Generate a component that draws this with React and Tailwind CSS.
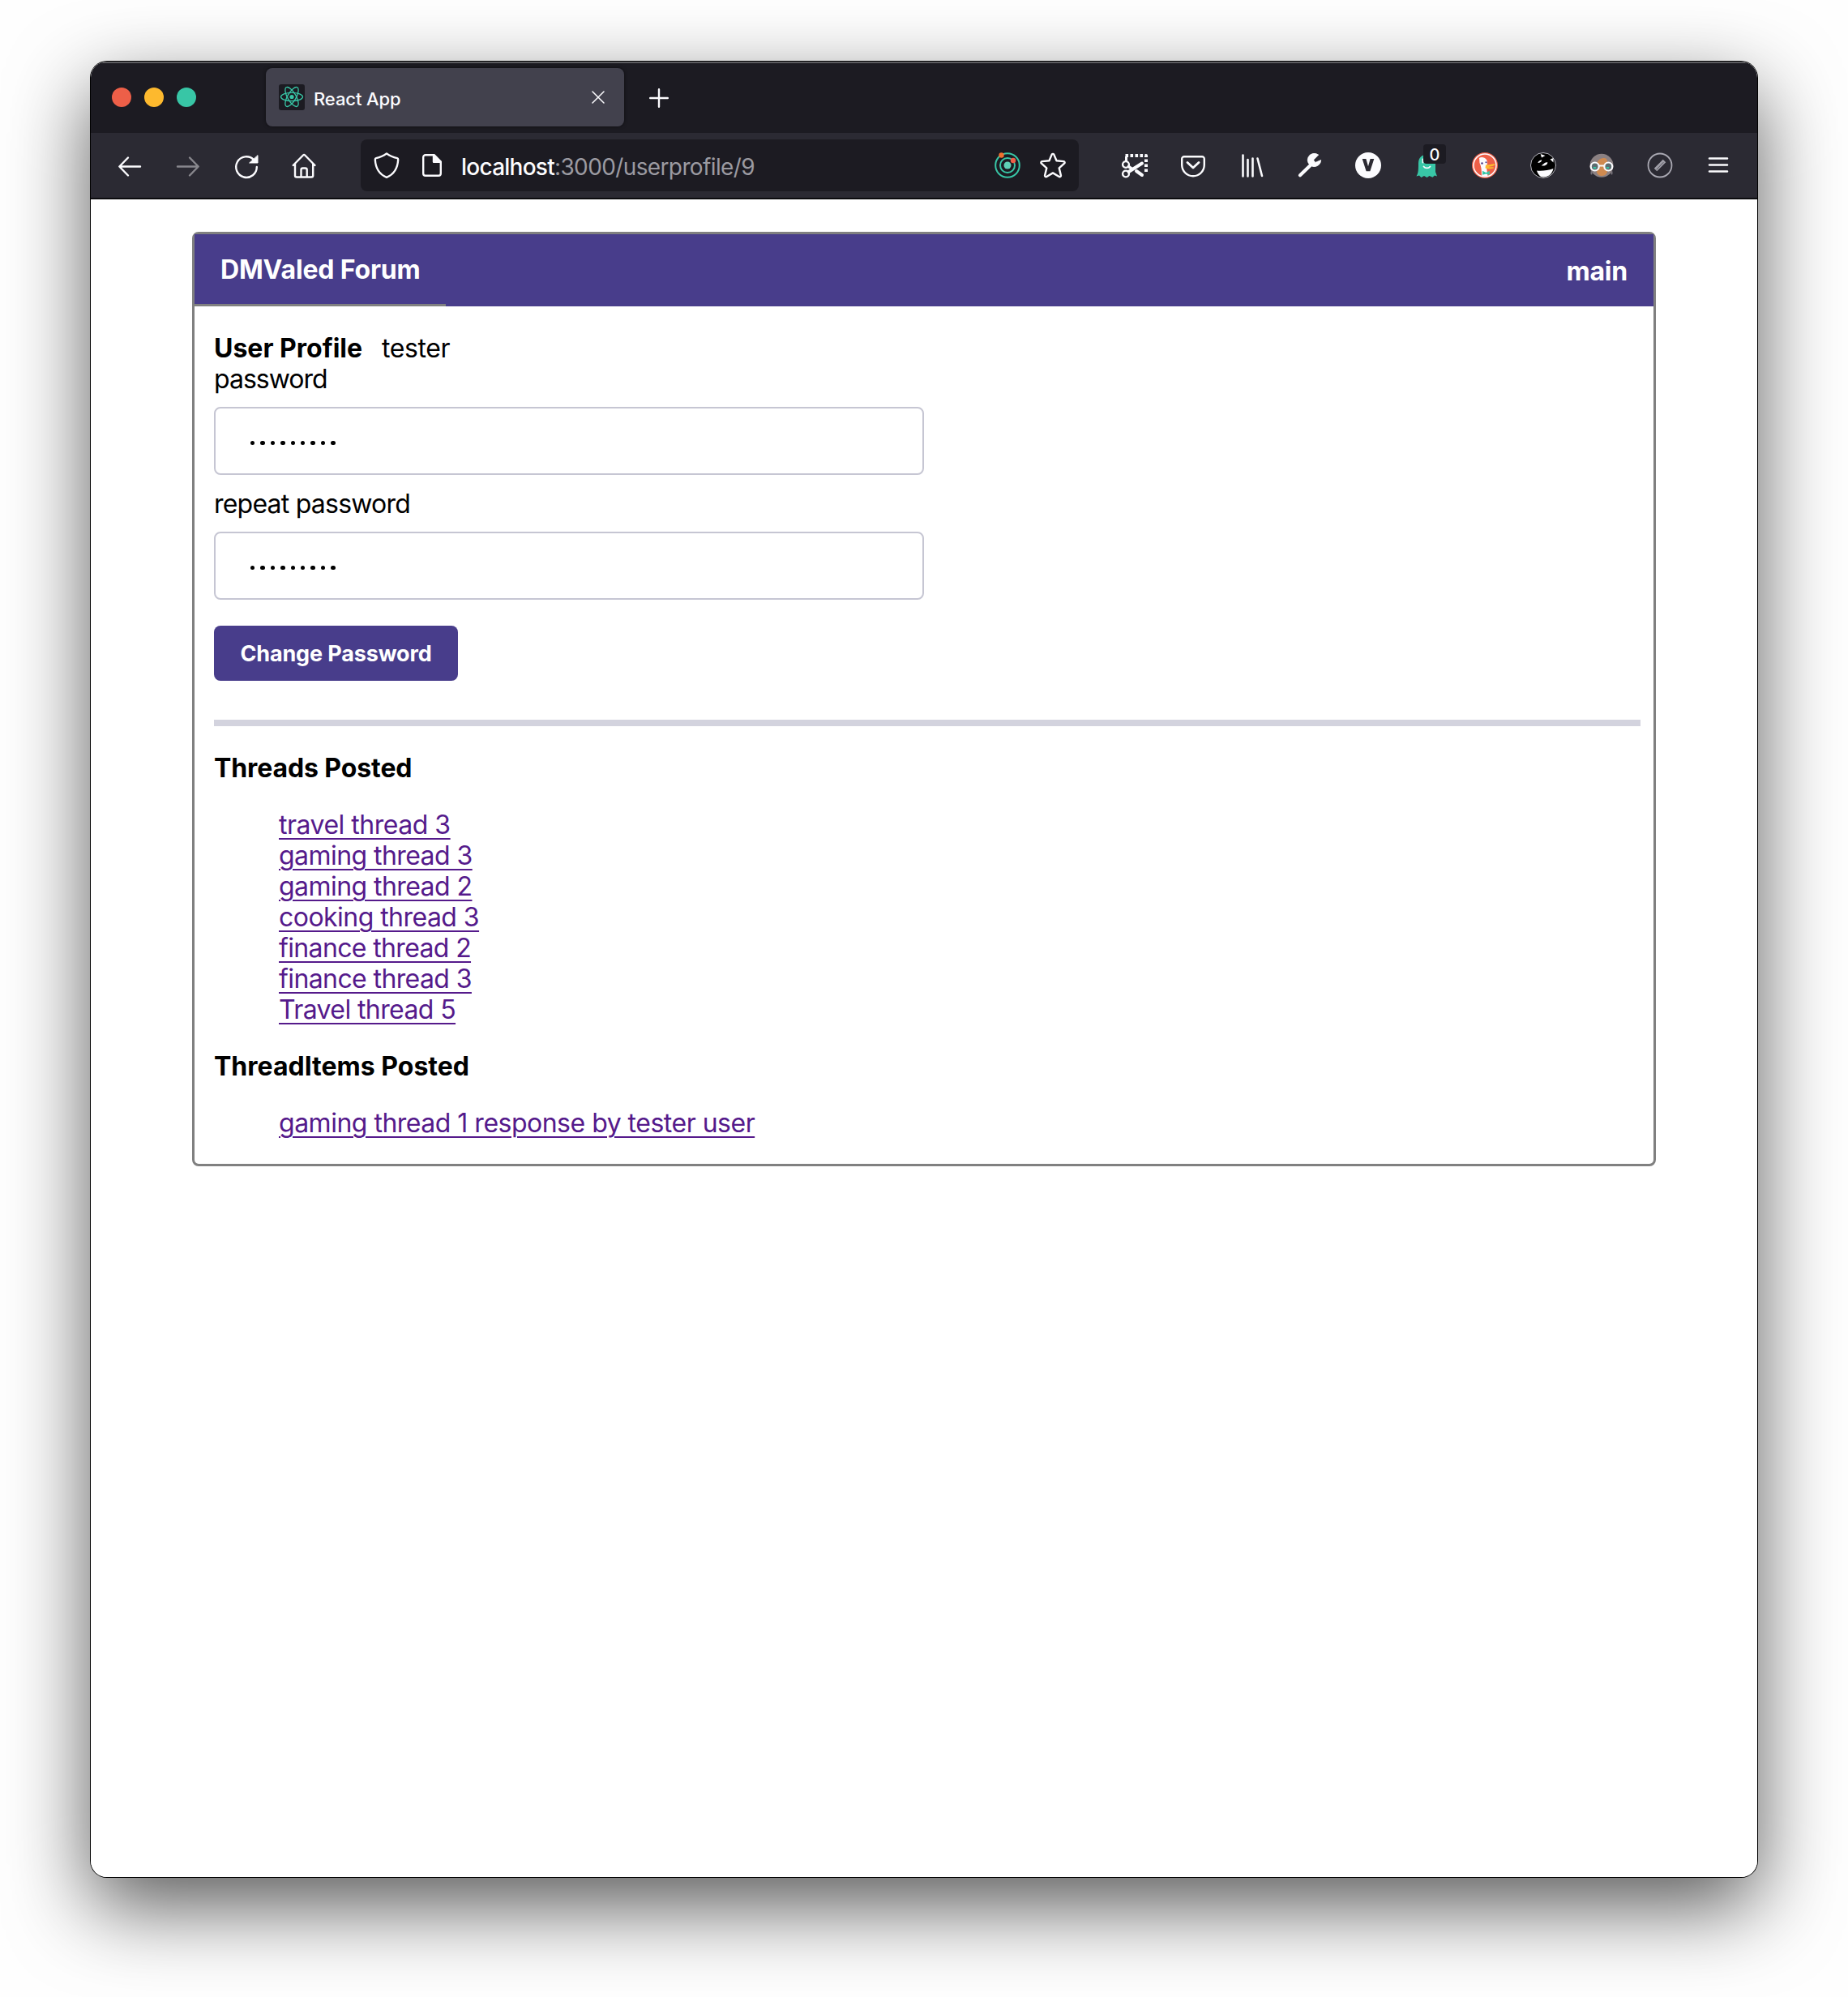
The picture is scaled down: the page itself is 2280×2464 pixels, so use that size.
import React from "react";

const threads = [
  ["travel thread 3", "tracking-[-0.49px]"],
  ["gaming thread 3", "tracking-[-0.56px]"],
  ["gaming thread 2", "tracking-[-0.56px]"],
  ["cooking thread 3", "tracking-[-0.54px]"],
  ["finance thread 2", "tracking-[-0.64px]"],
  ["finance thread 3", "tracking-[-0.6px]"],
  ["Travel thread 5", "tracking-[-0.6px]"],
];

const threadItems = [["gaming thread 1 response by tester user", "tracking-[-0.5px]"]];

function Slot({ children }) {
  return (
    <div className="flex h-20 w-[72px] shrink-0 items-center justify-center">
      <svg width="32" height="32" viewBox="0 0 32 32" fill="none" stroke="#fbfbfe" strokeWidth="2.4" strokeLinecap="round" strokeLinejoin="round" className="overflow-visible">
        {children}
      </svg>
    </div>
  );
}

function TabStrip() {
  return (
    <div className="flex h-[88px] items-center bg-[#1c1b22] shadow-[inset_0_2px_0_#5c5c60]">
      <div className="ml-[26px] flex w-[190px] gap-4">
        <span className="size-6 rounded-full bg-[#ed5f48]" />
        <span className="size-6 rounded-full bg-[#fdb92e]" />
        <span className="size-6 rounded-full bg-[#38c6a6]" />
      </div>
      <div className="flex h-[72px] w-[442px] items-center rounded-lg bg-[#42414d] pl-4 pr-6 shadow-[0_0_4px_rgba(0,0,0,0.5)]">
        <svg width="32" height="32" viewBox="0 0 32 32" fill="none" stroke="#38c6a6" strokeWidth="1.3">
          <rect width="32" height="32" rx="3" fill="#1c1b22" stroke="none" />
          <ellipse cx="16" cy="15.5" rx="13.5" ry="5.2" />
          <ellipse cx="16" cy="15.5" rx="13.5" ry="5.2" transform="rotate(60 16 15.5)" />
          <ellipse cx="16" cy="15.5" rx="13.5" ry="5.2" transform="rotate(120 16 15.5)" />
          <circle cx="16" cy="15.5" r="2.6" fill="#38c6a6" stroke="none" />
        </svg>
        <span className="ml-[11px] mt-[5px] grow whitespace-nowrap text-[22px] font-medium tracking-[-0.1px] text-[#fbfbfe]">React App</span>
        <svg width="16" height="16" viewBox="0 0 16 16" stroke="#fbfbfe" strokeWidth="1.5" strokeLinecap="round">
          <path d="M1 1l14 14M15 1L1 15" />
        </svg>
      </div>
      <svg className="ml-[31px] mt-[2px]" width="24" height="24" viewBox="0 0 24 24" stroke="#fbfbfe" strokeWidth="2.4" strokeLinecap="round">
        <path d="M12 1.2v21.6M1.2 12h21.6" />
      </svg>
    </div>
  );
}

function AddressBar() {
  return (
    <div className="ml-[33px] flex h-16 w-[886px] shrink-0 items-center rounded-lg bg-[#1c1b22]">
      <svg className="ml-4" width="32" height="32" viewBox="0 0 32 32" fill="none" stroke="#fbfbfe" strokeWidth="2.4" strokeLinejoin="round">
        <path d="M16 1.4C19.5 4.2 24.5 6.2 29 7.2C30 7.5 30.2 8 30.2 9C29.6 19 25.5 27 16 30.8C6.5 27 2.4 19 1.8 9C1.8 8 2 7.5 3 7.2C7.5 6.2 12.5 4.2 16 1.4Z" />
      </svg>
      <svg className="ml-7" width="24" height="28" viewBox="0 0 24 28" fill="none" stroke="#fbfbfe" strokeWidth="2.4" strokeLinejoin="round">
        <path d="M4 1.2H14.5L22.8 9.5V24a2.8 2.8 0 0 1-2.8 2.8H4A2.8 2.8 0 0 1 1.2 24V4A2.8 2.8 0 0 1 4 1.2Z" />
        <path d="M14 1.2V9.8H22.8Z" fill="#fbfbfe" />
      </svg>
      <span className="ml-[24px] mt-[3px] grow whitespace-nowrap text-[28px] tracking-[-0.62px] text-[#9b9aa1]">
        <span className="font-medium tracking-[-0.75px] text-[#fbfbfe]">localhost</span>:3000/userprofile/9
      </span>
      <svg width="32" height="32" viewBox="0 0 32 32" fill="none" stroke="#38c6a6" strokeWidth="2">
        <circle cx="16" cy="16" r="14.8" />
        <circle cx="16" cy="16" r="9" />
        <circle cx="16" cy="16" r="4.5" fill="#5fd0b5" stroke="none" />
        <circle cx="8.5" cy="3.5" r="3.2" fill="#f0702f" stroke="none" />
        <circle cx="23" cy="10" r="3.2" fill="#ed5f48" stroke="none" />
      </svg>
      <svg className="ml-6 mr-4" width="32" height="32" viewBox="0 0 32 32" fill="none" stroke="#fbfbfe" strokeWidth="2.4" strokeLinejoin="round">
        <path d="M14.7 2.6a1.5 1.5 0 0 1 2.6 0L20.5 10.3L29.3 11.1a1.5 1.5 0 0 1 .8 2.6L23.7 19.4L25.9 28.4a1.5 1.5 0 0 1-2.2 1.6L16 25.4L8.3 30a1.5 1.5 0 0 1-2.2-1.6L8.3 19.4L1.9 13.7a1.5 1.5 0 0 1 .8-2.6L11.5 10.3Z" />
      </svg>
    </div>
  );
}

function Extensions() {
  return (
    <div className="ml-[33px] flex shrink-0">
      <Slot>
        <path d="M4.5 4H30v22" strokeDasharray="3.6 2.4" strokeLinecap="butt" strokeWidth="4" />
        <path d="M5.500 5v6" strokeLinecap="butt" strokeWidth="3" />
        <circle cx="5" cy="15" r="3.9" strokeWidth="2.4" />
        <circle cx="5" cy="26.5" r="3.9" strokeWidth="2.4" />
        <path d="M8.5 24L25 13.5" strokeWidth="4" />
        <path d="M8.5 17.5L12 20" strokeWidth="3.5" />
        <path d="M18 23L25 28" strokeWidth="4" />
      </Slot>
      <Slot>
        <path d="M5 5.2h22a2.8 2.8 0 0 1 2.8 2.8v7.5a13.3 13.3 0 0 1-27.6 0V8A2.8 2.8 0 0 1 5 5.2Z" />
        <path d="M9 12.5l7 6.5 7-6.5" strokeWidth="2.8" />
      </Slot>
      <Slot>
        <path d="M5.5 3.5v26M11.5 9v20.5M17.5 7.5v22M23.5 7.5l5.5 21.5" strokeWidth="2.6" />
      </Slot>
      <Slot>
        <path d="M4 28.3L17.5 15.2" strokeWidth="4.2" />
        <path d="M26.5 2.9A8.2 8.2 0 1 0 29.7 9.5L22.8 12.5L20.6 9.6Z" fill="#fbfbfe" strokeWidth="0.8" />
      </Slot>
      <Slot>
        <circle cx="16" cy="16" r="16" fill="#fbfbfe" stroke="none" />
        <path d="M8.700 8H13.400L16 17.300L18.600 8H23.300L18.400 23.300H13.600Z" fill="#2b2a33" stroke="none" />
      </Slot>
      <div className="relative">
        <Slot>
          <path d="M6 14C6 7 9.5 3 15.5 3S27 7 27 14V24L29 29.5L26 28.5L23.5 30.8L19.5 29L16.5 31L13 29L9.5 31L7 28.5L3.5 29.5C5.5 26 6 24 6 14Z" fill="#38c6a6" stroke="none" />
          <path d="M12.5 17.5C14.5 20 18.5 20 20.5 17.5" strokeWidth="1.8" />
          <path d="M11.5 8.5v4" strokeWidth="1.8" />
        </Slot>
        <div className="absolute left-8 top-[14px] flex h-6 w-7 items-center justify-center rounded bg-[#1c1b22] pt-px text-[20px] font-medium leading-none text-[#fbfbfe]">0</div>
      </div>
      <Slot>
        <circle cx="16" cy="16" r="16" fill="#ed5f48" stroke="none" />
        <circle cx="16" cy="16" r="14" strokeWidth="1.5" />
        <path d="M9 7C11.5 5 16 6 18 9C19.5 11.5 19 15 18 18L19.5 29.5C16 30 13.5 29.5 12 28.5C12 22 11.5 17 9.5 13Z" fill="#fbfbfe" stroke="none" />
        <path d="M17 15.5C21 16 25 13.5 29 14.5C28 17 23 17.5 20.5 18C23 18.5 27 17.5 27.5 19C24 21 19 20.5 16.5 19.5Z" fill="#fdb92e" stroke="none" />
        <circle cx="12.5" cy="13.5" r="1.3" fill="#4a3d8a" stroke="none" />
        <circle cx="17.5" cy="12.3" r="1" fill="#4a3d8a" stroke="none" />
        <path d="M13 22.8L17.5 25L21.8 22.8V28L17.5 26.5L13 27.8Z" fill="#38c6a6" stroke="none" />
      </Slot>
      <Slot>
        <circle cx="16" cy="16" r="15.5" fill="#000" strokeWidth="1" stroke="#b5b4bd" />
        <path d="M8 22.5C14 23 22 22.5 28.5 20C27 27 22 30.5 16 30.5C12 30.5 9.5 27 8 22.5Z" fill="#fbfbfe" stroke="none" />
        <path d="M12.7 2L18.5 4L14 6.5ZM24.5 8.5L28.5 7L28.5 12.5Z" fill="#fbfbfe" stroke="none" />
        <path d="M9.3 13C10 11 12 9.5 14.2 9.3C14 12 12 13 9.3 13ZM13.5 16C15.5 16 17.5 11.5 21.3 12.3C21.5 15.5 17 17.5 13.5 16Z" fill="#fbfbfe" stroke="none" />
      </Slot>
      <Slot>
        <circle cx="16" cy="16.2" r="14.5" fill="#8b8183" stroke="none" />
        <path d="M9.5 17C10 12 12 8 18 7S23.5 13 23.5 19S22 29 16 29S9.5 24 9.5 17Z" fill="#cf8a50" stroke="none" />
        <path d="M3.5 24v2.5M28.5 24v2.5" stroke="#77727a" strokeWidth="2" />
        <circle cx="7.7" cy="17.5" r="5" fill="#5d6d70" strokeWidth="2.2" />
        <circle cx="24.3" cy="17.5" r="5" fill="#5d6d70" strokeWidth="2.2" />
        <path d="M6.5 19h2M22.5 19h2" stroke="#38c6a6" strokeWidth="1.8" />
        <path d="M13 16.5h6" strokeWidth="2.2" />
      </Slot>
      <Slot>
        <circle cx="16" cy="16" r="14.5" stroke="#a9a8b2" strokeWidth="1.8" />
        <path d="M10.5 21.5L21.5 10.5" stroke="#a09fa8" strokeWidth="5" strokeLinecap="butt" />
        <path d="M12 21L20 12.5" stroke="#55545e" strokeWidth="1" />
      </Slot>
      <Slot>
        <path d="M5 7.5h22M5 15.5h22M5 23.5h22" strokeWidth="2.6" />
      </Slot>
    </div>
  );
}

function NavBar() {
  return (
    <div className="flex h-[82px] items-center border-b-2 border-[#0c0c0f] bg-[#2b2a33] pl-3">
      <Slot>
        <path d="M3.5 17.5h25.5M14 6.5L3.3 17.5L14 28.5" />
      </Slot>
      <Slot>
        <path d="M3 17.5h25.5M18 6.5L28.7 17.5L18 28.5" stroke="#88878d" />
      </Slot>
      <Slot>
        <path d="M28.8 18A12.8 12.8 0 1 1 25 9" />
        <path d="M20 13H30V4Z" fill="#fbfbfe" strokeWidth="1" />
      </Slot>
      <Slot>
        <path d="M1.7 16L14 3.5a1.5 1.5 0 0 1 2.2 0L28.5 16M4 14V28.5a2 2 0 0 0 2 2H24.2a2 2 0 0 0 2-2V14M11.5 30V21.5a2 2 0 0 1 2-2H16.7a2 2 0 0 1 2 2V30" />
      </Slot>
      <AddressBar />
      <Extensions />
    </div>
  );
}

function PasswordField({ children }) {
  return (
    <div>
      <div>{children}</div>
      <div className="mb-[17px] mt-[15px] flex h-[84px] w-[876px] items-center gap-[7px] rounded-lg border-2 border-[#c6c6d3] pl-[43px] pt-[5px]">
        {Array.from({ length: 9 }, (_, i) => (
          <span key={i} className="size-[5.4px] rounded-full bg-black" />
        ))}
      </div>
    </div>
  );
}

function LinkList({ items }) {
  return (
    <ul className="my-8 pl-20">
      {items.map(([text, tracking]) => (
        <li key={text}>
          <a className={`text-[#551a8b] underline decoration-2 underline-offset-[5px] ${tracking}`}>{text}</a>
        </li>
      ))}
    </ul>
  );
}

export default function App() {
  return (
    <div className="h-[2464px] w-[2280px] overflow-hidden bg-[#fefefe] pl-28 pt-[76px] font-[Inter,sans-serif]">
      <div className="h-[2240px] w-[2056px] rounded-[20px] shadow-[0_0_0_1px_#000,0_36px_100px_rgba(0,0,0,0.65)]">
        <div className="h-full overflow-hidden rounded-[20px] bg-white">
          <TabStrip />
          <NavBar />
          <div className="mx-[125px] mt-10 rounded-lg border-[3px] border-[#808080] text-[32px] leading-[38px] text-black">
            <div className="flex h-[89px] justify-between bg-[#483d8b] font-bold text-white">
              <div className="w-[310px] border-b-[3px] border-[#808080] pl-8 pt-[25px] tracking-[-0.15px]">DMValed Forum</div>
              <div className="pr-8 pt-[27px] tracking-[-0.2px]">main</div>
            </div>
            <div className="-mb-px pl-6 pr-4 pt-[33px]">
              <div>
                <span className="mr-6 font-bold">User Profile</span>
                <span className="tracking-[-0.4px]">tester</span>
              </div>
              <PasswordField>
                <span className="tracking-[-1px]">password</span>
              </PasswordField>
              <PasswordField>
                <span className="tracking-[-0.78px]">repeat password</span>
              </PasswordField>
              <button className="mt-[15px] h-[68px] w-[301px] rounded-lg bg-[#483d8b] pt-[2px] text-[27px] font-bold tracking-[-0.15px] text-white">Change Password</button>
              <div className="mt-12 h-2 bg-[#d3d3de]" />
              <div className="mt-[33px] font-bold tracking-[-0.1px]">Threads Posted</div>
              <LinkList items={threads} />
              <div className="font-bold">ThreadItems Posted</div>
              <LinkList items={threadItems} />
            </div>
          </div>
        </div>
      </div>
    </div>
  );
}
